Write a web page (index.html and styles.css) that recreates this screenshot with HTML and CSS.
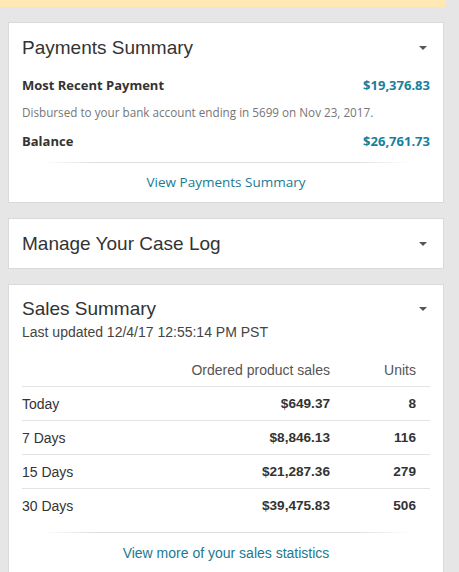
FILE: index.html
```html
<!DOCTYPE html>
<html lang="en">
<head>
    <meta charset="UTF-8">
    <meta name="viewport" content="width=device-width, initial-scale=1.0">
    <title>Seller Dashboard</title>
    <link rel="stylesheet" href="styles.css">
</head>
<body>
    <div class="noticeBar"></div>

    <div class="widgetColumn">
        <!-- Payments -->
        <section class="widget payments">
            <div class="widget-head">
                <h2>Payments Summary</h2>
                <span class="caret"></span>
            </div>
            <div class="pay-row">
                <span class="pay-label">Most Recent Payment</span>
                <span class="pay-amount">$19,376.83</span>
            </div>
            <div class="pay-note">Disbursed to your bank account ending in 5699 on Nov 23, 2017.</div>
            <div class="pay-row balance">
                <span class="pay-label">Balance</span>
                <span class="pay-amount">$26,761.73</span>
            </div>
            <div class="fade-rule"></div>
            <a class="widget-link" href="#">View Payments Summary</a>
        </section>

        <!-- Case log -->
        <section class="widget">
            <div class="widget-head">
                <h2>Manage Your Case Log</h2>
                <span class="caret"></span>
            </div>
        </section>

        <!-- Sales -->
        <section class="widget sales">
            <div class="widget-head sales-head">
                <h2>Sales Summary</h2>
                <span class="caret"></span>
            </div>
            <div class="updated">Last updated 12/4/17 12:55:14 PM PST</div>

            <table class="sales-table">
                <thead>
                    <tr>
                        <th></th>
                        <th class="num">Ordered product sales</th>
                        <th class="num units">Units</th>
                    </tr>
                </thead>
                <tbody>
                    <tr>
                        <td>Today</td>
                        <td class="num val">$649.37</td>
                        <td class="num units val">8</td>
                    </tr>
                    <tr>
                        <td>7 Days</td>
                        <td class="num val">$8,846.13</td>
                        <td class="num units val">116</td>
                    </tr>
                    <tr>
                        <td>15 Days</td>
                        <td class="num val">$21,287.36</td>
                        <td class="num units val">279</td>
                    </tr>
                    <tr>
                        <td>30 Days</td>
                        <td class="num val">$39,475.83</td>
                        <td class="num units val">506</td>
                    </tr>
                </tbody>
            </table>

            <div class="fade-rule"></div>
            <a class="widget-link sales-link" href="#">View more of your sales statistics</a>
        </section>
    </div>
</body>
</html>
```

FILE: styles.css
```css
body {
    margin: 0;
    background: #e6e6e6;
    font-family: "Liberation Sans", Arial, sans-serif;
    color: #333;
}

/* yellow alert strip at the top */
.noticeBar {
    width: 445px;
    height: 7px;
    background: #fee9b4;
}

.widgetColumn {
    width: 436px;
    margin: 15px 0 0 8px;
    display: flex;
    flex-direction: column;
    gap: 15px;
}

.widget {
    background: #fff;
    border: 1px solid #dadada;
    padding: 0 13px;
}

.widget-head {
    height: 49px;
    display: flex;
    align-items: center;
    justify-content: space-between;
}

.widget-head h2 {
    margin: 0;
    font-family: "Liberation Sans", Arial, sans-serif;
    font-size: 19px;
    font-weight: normal;
    color: #333;
    line-height: 24px;
}

/* small dropdown arrow */
.caret {
    width: 0;
    height: 0;
    border-left: 4px solid transparent;
    border-right: 4px solid transparent;
    border-top: 4px solid #555;
    margin-right: 3px;
}

/* Payments card */
.payments {
    font-family: "Open Sans", "Liberation Sans", sans-serif;
}

.pay-row {
    height: 26px;
    display: flex;
    align-items: center;
    justify-content: space-between;
    font-size: 13px;
    font-weight: bold;
}

.pay-label {
    color: #333;
}

.pay-amount {
    color: #16809b;
}

.pay-note {
    height: 28px;
    line-height: 28px;
    font-size: 11.7px;
    color: #767676;
}

.pay-row.balance {
    height: 30px;
}

.fade-rule {
    height: 1px;
    margin: 6px 20px 0;
    background: linear-gradient(to right, rgba(221, 221, 221, 0), #ddd 15%, #ddd 85%, rgba(221, 221, 221, 0));
}

.widget-link {
    display: block;
    height: 39px;
    line-height: 39px;
    text-align: center;
    font-size: 13.5px;
    color: #1a7a94;
    text-decoration: none;
}

/* Sales card */
.sales-head {
    height: auto;
    padding-top: 12px;
}

.updated {
    font-size: 14px;
    line-height: 20px;
    color: #444;
    margin-top: 1px;
}

.sales-table {
    width: 100%;
    border-collapse: collapse;
    margin-top: 11px;
    font-size: 14px;
}

.sales-table th {
    height: 33px;
    font-weight: normal;
    color: #555;
    border-bottom: 1px solid #e3e3e3;
    padding: 0;
}

.sales-table td {
    height: 33px;
    padding: 0;
    color: #333;
    border-bottom: 1px solid #e3e3e3;
}

.sales-table tbody tr:last-child td {
    border-bottom: none;
}

.sales-table .num {
    text-align: right;
}

.sales-table .units {
    width: 86px;
    padding-right: 14px;
}

.sales-table .val {
    font-weight: bold;
    font-size: 13.6px;
}

.sales-table td:first-child {
    text-align: left;
}

.sales .fade-rule {
    margin-top: 10px;
}

.sales-link {
    font-size: 14px;
    height: 40px;
    line-height: 40px;
}
```
